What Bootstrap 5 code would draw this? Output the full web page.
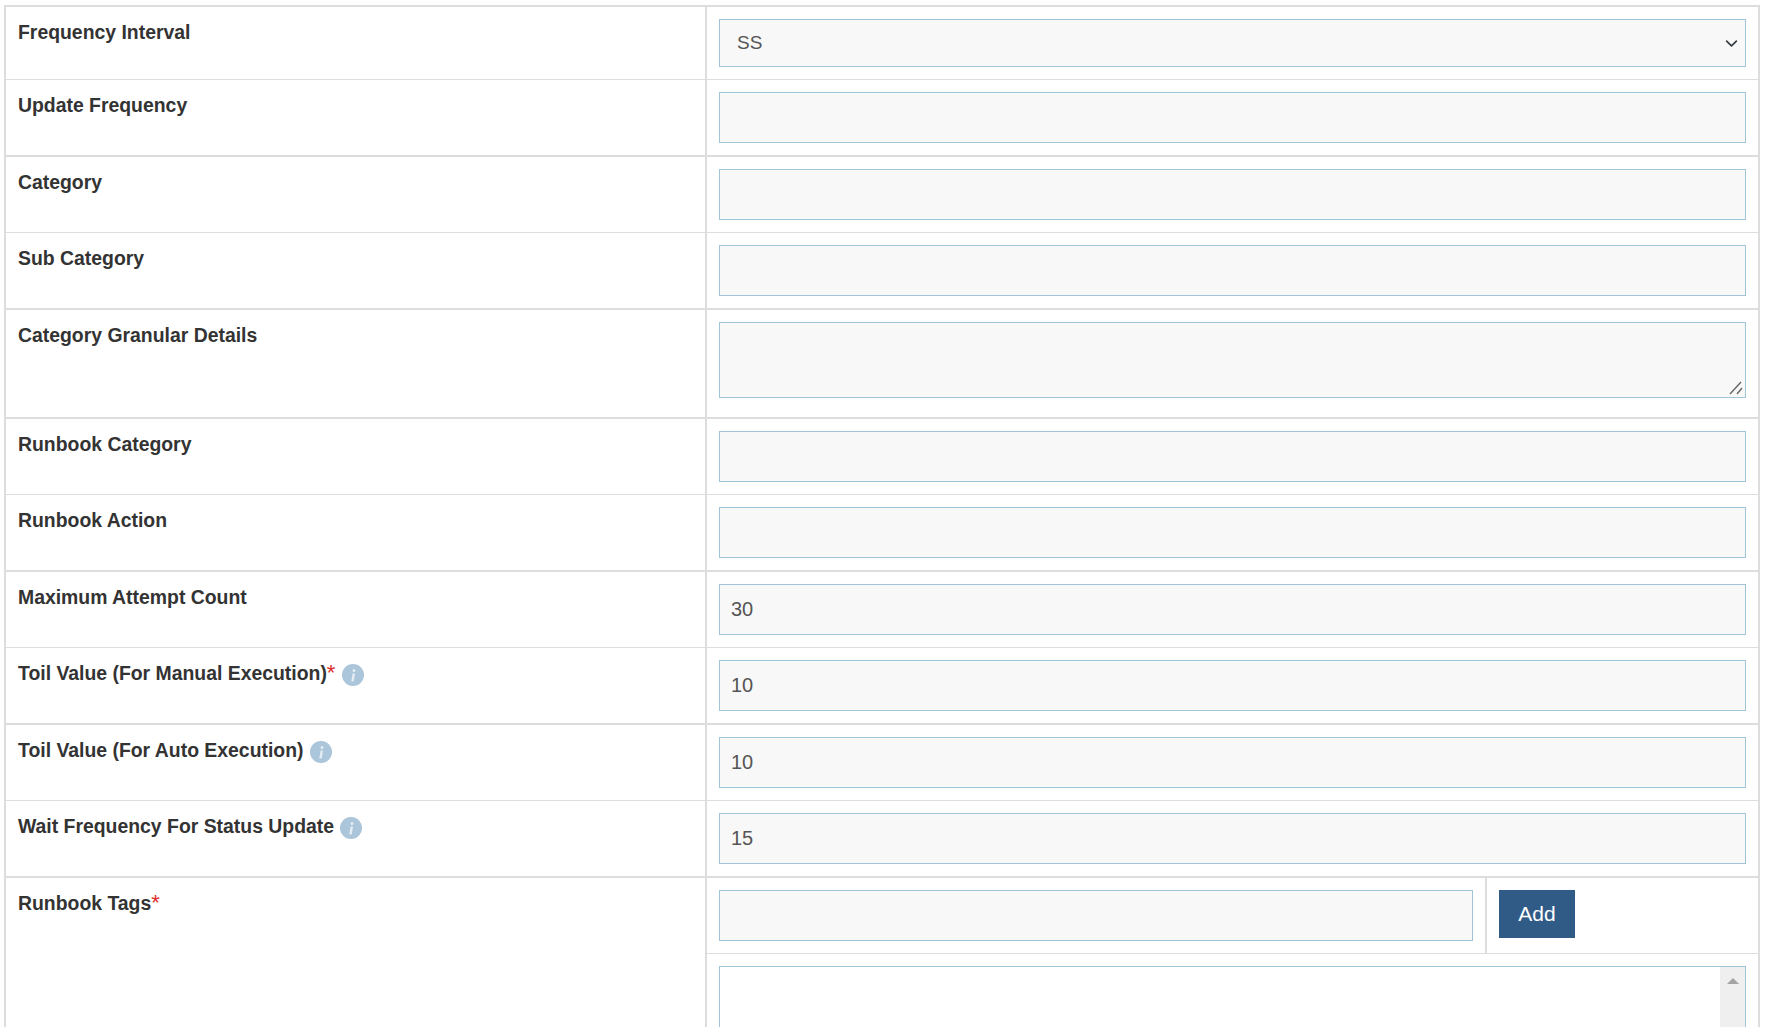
<!DOCTYPE html>
<html lang="en">
<head>
    <meta charset="UTF-8">
    <meta name="viewport" content="width=device-width, initial-scale=1.0">
    <title>Runbook Details</title>
    <link href="https://cdn.jsdelivr.net/npm/bootstrap@5.3.0/dist/css/bootstrap.min.css" rel="stylesheet">
    <style>
        html, body {
            height: 1027px;
            overflow: hidden;
        }
        body {
            font-family: "Liberation Sans", Arial, sans-serif;
            background: #fff;
            color: #333;
        }
        /* Form table */
        .form-sheet {
            width: 1756px;
            margin: 5px 0 0 4px;
            table-layout: fixed;
            border-collapse: separate;
            border-spacing: 0;
            border-top: 2px solid #ddd;
            border-left: 2px solid #ddd;
            border-right: 2px solid #ddd;
        }
        .form-sheet td {
            padding: 12px;
            vertical-align: top;
            border-bottom: 1px solid #ddd;
        }
        .form-sheet tr.thick td {
            border-bottom-width: 2px;
        }
        .form-sheet td.label-cell {
            width: 701px;
            padding-top: 13px;
            border-right: 2px solid #ddd;
            font-size: 19.4px;
            font-weight: 700;
            line-height: 24px;
        }
        .form-sheet td.tags-cell {
            padding: 0;
            border-bottom: 0;
        }
        .form-sheet td.text-area-cell {
            padding-bottom: 19px;
        }
        .req {
            color: #e02b2b;
            font-weight: 400;
            font-size: 22px;
            line-height: 1;
        }
        .info-dot {
            display: inline-block;
            width: 22px;
            height: 22px;
            margin-left: 1px;
            vertical-align: -6px;
        }
        .field.form-control, .field.form-select {
            height: 51px;
            padding: 6px 11px;
            border: 1px solid #a0c4d8;
            border-radius: 0;
            background-color: #f8f8f8;
            color: #555;
            font-size: 20px;
            box-shadow: none;
        }
        .field.form-select {
            height: 48px;
            padding-left: 17px;
            font-size: 19px;
            background-position: right 5px center;
            background-size: 17px 13px;
        }
        textarea.field.form-control {
            height: 76px;
            display: block;
            resize: none;
            background-image: url("data:image/svg+xml,%3csvg xmlns='http://www.w3.org/2000/svg' width='14' height='14'%3e%3cpath d='M1 13 12 1M8 13l5-6' fill='none' stroke='%23666' stroke-width='1.4'/%3e%3c/svg%3e");
            background-repeat: no-repeat;
            background-position: right 2px bottom 2px;
        }
        .tag-entry {
            border-bottom: 1px solid #ddd;
        }
        .tag-input-wrap {
            width: 780px;
            padding: 12px;
            border-right: 2px solid #ddd;
        }
        .tag-btn-wrap {
            padding: 12px;
        }
        .btn-add {
            width: 76px;
            height: 48px;
            padding: 0;
            border: 0;
            border-radius: 0;
            background: #315b87;
            color: #fff;
            font-size: 21px;
        }
        .tag-list-wrap {
            padding: 12px;
        }
        .tag-list {
            height: 140px;
            border: 1px solid #a0c4d8;
            background: #fff;
        }
        .fake-scroll {
            width: 25px;
            background: #efefef;
            padding-top: 11px;
        }
        .scroll-arrow {
            width: 0;
            height: 0;
            margin: 0 auto;
            border-left: 6px solid transparent;
            border-right: 6px solid transparent;
            border-bottom: 6px solid #a3a3a3;
        }
    </style>
</head>
<body>
    <table class="form-sheet">
        <tr>
            <td class="label-cell">Frequency Interval</td>
            <td>
                <select class="form-select field"><option>SS</option></select>
            </td>
        </tr>
        <tr class="thick">
            <td class="label-cell">Update Frequency</td>
            <td><input type="text" class="form-control field"></td>
        </tr>
        <tr>
            <td class="label-cell">Category</td>
            <td><input type="text" class="form-control field"></td>
        </tr>
        <tr class="thick">
            <td class="label-cell">Sub Category</td>
            <td><input type="text" class="form-control field"></td>
        </tr>
        <tr class="thick">
            <td class="label-cell">Category Granular Details</td>
            <td class="text-area-cell"><textarea class="form-control field"></textarea></td>
        </tr>
        <tr>
            <td class="label-cell">Runbook Category</td>
            <td><input type="text" class="form-control field"></td>
        </tr>
        <tr class="thick">
            <td class="label-cell">Runbook Action</td>
            <td><input type="text" class="form-control field"></td>
        </tr>
        <tr>
            <td class="label-cell">Maximum Attempt Count</td>
            <td><input type="text" class="form-control field" value="30"></td>
        </tr>
        <tr class="thick">
            <td class="label-cell">Toil Value (For Manual Execution)<span class="req">*</span>
                <svg class="info-dot" viewBox="0 0 22 22"><circle cx="11" cy="11" r="11" fill="#abc5da"/><circle cx="12" cy="6.5" r="1.5" fill="#e4edf4"/><path d="M10.6 9.5h2.4l-1.3 8H9.3z" fill="#e4edf4"/></svg>
            </td>
            <td><input type="text" class="form-control field" value="10"></td>
        </tr>
        <tr>
            <td class="label-cell">Toil Value (For Auto Execution)
                <svg class="info-dot" viewBox="0 0 22 22"><circle cx="11" cy="11" r="11" fill="#abc5da"/><circle cx="12" cy="6.5" r="1.5" fill="#e4edf4"/><path d="M10.6 9.5h2.4l-1.3 8H9.3z" fill="#e4edf4"/></svg>
            </td>
            <td><input type="text" class="form-control field" value="10"></td>
        </tr>
        <tr class="thick">
            <td class="label-cell">Wait Frequency For Status Update
                <svg class="info-dot" viewBox="0 0 22 22"><circle cx="11" cy="11" r="11" fill="#abc5da"/><circle cx="12" cy="6.5" r="1.5" fill="#e4edf4"/><path d="M10.6 9.5h2.4l-1.3 8H9.3z" fill="#e4edf4"/></svg>
            </td>
            <td><input type="text" class="form-control field" value="15"></td>
        </tr>
        <tr>
            <td class="label-cell">Runbook Tags<span class="req">*</span></td>
            <td class="tags-cell">
                <div class="d-flex tag-entry">
                    <div class="tag-input-wrap"><input type="text" class="form-control field"></div>
                    <div class="tag-btn-wrap"><button type="button" class="btn btn-add">Add</button></div>
                </div>
                <div class="tag-list-wrap">
                    <div class="tag-list d-flex justify-content-end">
                        <div class="fake-scroll"><div class="scroll-arrow"></div></div>
                    </div>
                </div>
            </td>
        </tr>
    </table>

    <script src="https://cdn.jsdelivr.net/npm/bootstrap@5.3.0/dist/js/bootstrap.bundle.min.js"></script>
</body>
</html>
